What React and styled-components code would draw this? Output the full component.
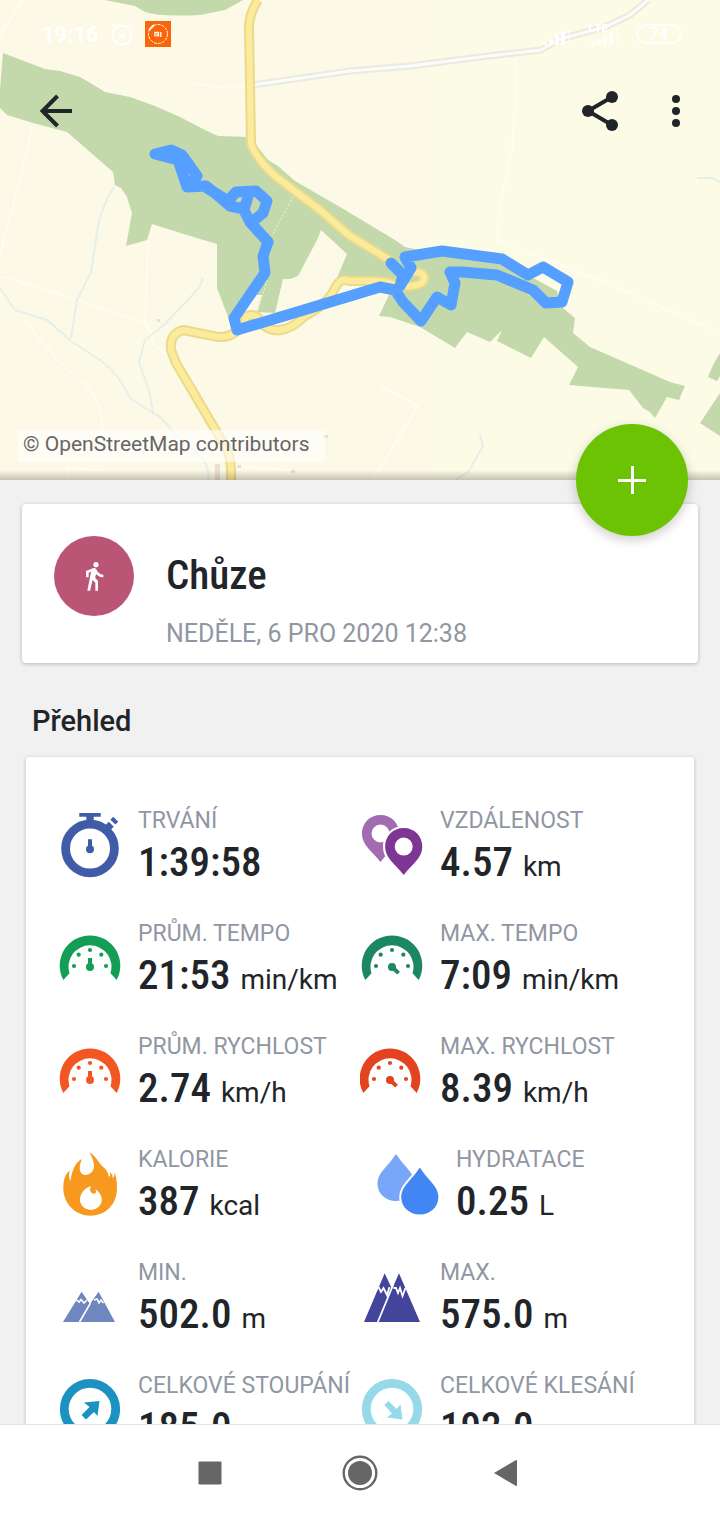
import React from "react";
import styled, { createGlobalStyle } from "styled-components";
import { MdDirectionsWalk } from "react-icons/md";

const GlobalStyle = createGlobalStyle`
  * { box-sizing: border-box; }
  body { margin: 0; background: #f1f1f1; font-family: Roboto, "Liberation Sans", sans-serif; color: #212529; }
  button { border: 0; padding: 0; background: none; color: inherit; font: inherit; cursor: pointer; }
  h1, h2, p, dl, dt, dd { margin: 0; font-weight: inherit; }
  svg { display: block; }
`;

const Screen = styled.div`
  display: flex;
  flex-direction: column;
  height: 100vh;
`;

const Content = styled.main`
  flex: 1;
  min-height: 0;
  overflow-y: auto;
  scrollbar-width: none;
`;

const MapHeader = styled.header`
  position: relative;
  display: grid;
  grid-template: 480px / 100%;
`;

const MapDrawing = styled.svg`
  grid-area: 1 / 1;
  width: 100%;
  height: 100%;
`;

const MapOverlay = styled.div`
  grid-area: 1 / 1;
  z-index: 1;
  display: flex;
  flex-direction: column;
  align-items: stretch;
`;

const StatusBar = styled.div`
  display: flex;
  align-items: center;
  gap: 11px;
  height: 68px;
  padding: 0 38px 0 42px;
  color: #ffffff;
`;

const Clock = styled.span`
  padding-top: 2px;
  font-size: 22px;
  line-height: 28px;
  font-weight: 700;
`;

const StatusRight = styled.div`
  display: flex;
  align-items: center;
  gap: 12px;
  margin-left: auto;
`;

const Battery = styled.span`
  display: grid;
  place-items: center;
  width: 46px;
  height: 20px;
  border: 2px solid #ffffff;
  border-radius: 10px;
  font-size: 16px;
  line-height: 16px;
  font-weight: 700;
`;

const Toolbar = styled.div`
  display: flex;
  align-items: center;
  gap: 28px;
  padding: 19px 20px 0 32px;
`;

const ToolButton = styled.button`
  width: 48px;
  height: 48px;
  &:first-child { margin-right: auto; }
`;

const Attribution = styled.p`
  align-self: flex-start;
  margin: auto 0 18px 18px;
  padding: 0 16px 4px 5px;
  background: rgba(255, 255, 255, 0.6);
  color: #666666;
  font-size: 21px;
  line-height: 28px;
`;

const AddButton = styled.button`
  position: absolute;
  right: 32px;
  bottom: -56px;
  z-index: 2;
  display: grid;
  place-items: center;
  width: 112px;
  height: 112px;
  border-radius: 50%;
  background: #6cc304;
  box-shadow: 0 4px 12px rgba(0, 0, 0, 0.2);
`;

const Card = styled.section`
  background: #ffffff;
  border-radius: 4px;
  box-shadow: 0 1px 4px rgba(0, 0, 0, 0.24);
`;

const SummaryCard = styled(Card)`
  display: flex;
  gap: 32px;
  margin: 24px 22px 0;
  padding: 32px 32px 13px;
`;

const SportBadge = styled.div`
  display: grid;
  place-items: center;
  flex: none;
  width: 80px;
  height: 80px;
  border-radius: 50%;
  background: #ba5576;
  color: #ffffff;
`;

const SportName = styled.h1`
  padding-top: 12px;
  font-family: "Roboto Condensed", Roboto, sans-serif;
  font-size: 41px;
  line-height: 54px;
  font-weight: 500;
`;

const SportDate = styled.p`
  margin-top: 16px;
  color: #9196a3;
  font-size: 25px;
  line-height: 32px;
`;

const SectionTitle = styled.h2`
  margin: 38px 32px 16px;
  font-size: 29px;
  line-height: 40px;
  font-weight: 500;
`;

const StatsCard = styled(Card)`
  margin: 0 26px 32px;
  padding: 48px 32px;
`;

const StatGrid = styled.dl`
  display: grid;
  grid-template-columns: 1fr 1fr;
  row-gap: 29px;
`;

const StatItem = styled.div`
  display: grid;
  grid-template: 32px 52px / 64px 1fr;
  column-gap: 16px;
  padding-left: ${(p) => (p.$indent ? "16px" : "0")};
  white-space: nowrap;
`;

const StatIcon = styled.svg`
  grid-row: 1 / 3;
  width: 64px;
  height: 84px;
`;

const StatLabel = styled.dt`
  grid-column: 2;
  color: #9196a3;
  font-size: 23px;
  line-height: 32px;
`;

const StatValue = styled.dd`
  grid-column: 2;
  font-family: "Roboto Condensed", Roboto, sans-serif;
  font-size: 41px;
  line-height: 50px;
  font-weight: 500;
`;

const StatUnit = styled.span`
  margin-left: 10px;
  font-family: Roboto, "Liberation Sans", sans-serif;
  font-size: 28px;
  font-weight: 400;
`;

const SystemNav = styled.nav`
  display: flex;
  justify-content: center;
  flex: none;
  height: 96px;
  border-top: 1px solid #e2e2e2;
  background: #ffffff;
`;

const NavButton = styled.button`
  display: grid;
  place-items: center;
  width: 150px;
  color: #666666;
`;

function RouteMap() {
  return (
    <MapDrawing viewBox="0 0 720 480" preserveAspectRatio="xMidYMid slice" role="img" aria-label="Mapa trasy">
      <defs>
        <linearGradient id="mapEdge" x1="0" y1="0" x2="0" y2="1">
          <stop offset="0" stopColor="#000000" stopOpacity="0" />
          <stop offset="1" stopColor="#000000" stopOpacity="0.22" />
        </linearGradient>
      </defs>
      <rect width="720" height="480" fill="#fcf9e6" />
      <rect x="430" width="290" height="480" fill="#fcfbe6" />
      <g fill="#c3d9ac">
        <path d="M105 0L135 6L145 12Q160 17 200 15L225 10L243 0Z" />
        <path d="M3 53L45 69L60 71L80 77L92 84L105 92L130 97L155 106L180 117L205 130L218 136L250 137L268 160L278 166L295 181L340 207L395 240L405 247L440 254L500 264L537 280L557 291L563 308L575 318L573 333L590 347L670 382L685 386L679 400L667 397L655 418L650 412L643 408L629 390L569 385L578 367L544 337L531 358L497 341L502 330L490 342L467 332L455 348L420 327L390 317L379 316L389 295L384 281L337 278L347 254L321 230L317 240L298 276L290 279L283 279L275 313L257 312L262 295L255 295L245 312L230 322L217 288L217 244L200 239L152 224L147 240L126 246L132 213L127 197L121 188L115 185L113 172L67 132L33 123L7 115L0 108L0 90Z" />
        <path d="M720 353L713 365L708 377L717 381L720 376ZM720 393L700 423L720 436Z" />
      </g>
      <g fill="none" stroke="#fffdf2" strokeWidth="2">
        <path d="M22 0L0 36M32 127L20 180L5 235L0 258M0 276L60 294L145 323Q152 330 153 343L166 355M148 240L145 323M25 320Q60 367 83 382Q103 401 102 430" />
        <path d="M515 56L516 90L512 150L500 205L497 240M495 240L600 280L720 333M380 385L418 406L373 480M193 83L215 87L249 86" />
        <path d="M68 480V468L110 471M235 466L290 470" />
        <path d="M293 197L272 236M267 280L257 314" strokeDasharray="2 2" strokeWidth="1" opacity="0.7" />
      </g>
      <g fill="none" stroke="#e6efea" strokeWidth="2">
        <path d="M114 187Q98 212 96 240L91 272L77 300L71 338M0 288L15 310L47 320L71 341L100 360Q120 375 130 398L153 413Q163 417 171 430L200 456Q210 466 208 480" />
        <path d="M203 278L199 288L165 324L145 340L139 363L149 390L153 413M697 178L712 178L720 182M480 434L483 446L468 472L455 480" />
      </g>
      <path d="M252 85L350 71L410 66L480 57L541 50L560 39L605 27L630 15L648 0" fill="none" stroke="#ebeae0" strokeWidth="7" />
      <path d="M252 85L350 71L410 66L480 57L541 50L560 39L605 27L630 15L648 0" fill="none" stroke="#fbfbf8" strokeWidth="3" />
      {[["#eada8b", 10], ["#fdeb9c", 6]].map(([color, width]) => (
        <path
          key={color}
          d="M258 0Q249 14 249 27L251 143Q254 156 275 176L320 210L350 236L388 259L400 272H415Q425 272 424 280Q421 287 402 286L380 281H350Q340 277 335 288Q327 305 305 316Q281 339 263 325Q257 312 247 316Q238 338 218 337L183 330Q169 334 171 350L176 363L222 441Q232 452 231 480"
          fill="none"
          stroke={color}
          strokeWidth={width}
          strokeLinejoin="round"
        />
      ))}
      <g fill="#eadfd3">
        <path d="M157 319h3v3h-3zM215 464h5v16h-5zM237 465h4v3h-4zM291 470h4v3h-4zM323 435h5v3h-5z" />
      </g>
      <g fill="none" stroke="#549fff" strokeWidth="11" strokeLinejoin="round" strokeLinecap="round">
        <path d="M155 154L171 150L182 155L197 176L187 187L178 160L155 154M176 156L184 160M187 187L206 186L222 199L230 206L244 209M204 186L228 201L236 192L256 191L267 201L263 213L252 222M249 193L244 210L250 222L268 242" />
        <path d="M268 242L263 256L265 273L234 318L237 330L380 287L395 290L403 302L421 321L437 297L451 305L455 283L450 272H462L497 275L533 290L546 303L562 302L568 282L543 267L528 275L502 259L442 251L405 257L411 268L400 286L403 275L391 263" />
      </g>
      <rect y="470" width="720" height="10" fill="url(#mapEdge)" />
    </MapDrawing>
  );
}

function AlarmIcon() {
  return (
    <svg width="24" height="24" viewBox="0 0 24 24" fill="none" stroke="currentColor" strokeWidth="2">
      <circle cx="12" cy="13" r="9.500" />
      <path d="M8 11.500l4 4 4-4M1 5l5-4M23 5l-5-4" />
    </svg>
  );
}

function MiBadge() {
  return (
    <svg width="26" height="26" viewBox="0 0 26 26" fill="none" stroke="#ffffff">
      <rect width="26" height="26" fill="#fb6408" stroke="none" />
      <circle cx="13" cy="13" r="9.500" strokeDasharray="3 1" />
      <path d="M4 9L9 4" strokeWidth="2" />
      <path d="M10 15.500V11.500H13.500V15.500M12 13V15.500M15.800 11V16" strokeWidth="1.300" />
    </svg>
  );
}

function SignalIcon({ lte }) {
  return (
    <svg width="36" height="26" viewBox="0 0 36 26" fill="currentColor">
      <path d="M3 21h4v3H3zM9 18h4v6H9zM15 14h4v10h-4zM21 10h4v14h-4z" opacity={lte ? 0.8 : 1} />
      <path d="M28 7h2v17h-2z" opacity="0.4" />
      {lte && <path d="M2 3v7h4M7 4h6M10 4v7M20 4h-5v6h5M15 7h4" fill="none" stroke="currentColor" strokeWidth="2" />}
    </svg>
  );
}

function Gauge({ color, max, shift = 0 }) {
  return (
    <g fill={color} transform={`translate(${shift} 0)`}>
      <path d="M5.300 62A30.300 30.300 0 1 1 58.700 62L52.500 55.300A21.500 21.500 0 1 0 11.500 55.300Z" />
      {[[16, 48], [20.7, 36.7], [32, 32], [43.3, 36.7], [48, 48]].map(([x, y]) => (
        <circle key={x} cx={x} cy={y} r="2.100" />
      ))}
      <circle cx="32" cy="49" r="4" />
      <path d="M30 40h4v9h-4z" transform={max ? "rotate(133 32 49)" : undefined} />
    </g>
  );
}

const PIN = "M0 -18.500C10.500 -18.500 18.600 -10.500 18.600 0C18.600 12 8 18 0 28.500C-8 18 -18.600 12 -18.600 0C-18.600 -10.500 -10.500 -18.500 0 -18.500ZM0 -9A9 9 0 1 0 0 9A9 9 0 1 0 0 -9Z";
const DROP = "M0 -28.500C7 -17 18.600 -10 18.600 1C18.600 11 10.500 18.500 0 18.500S-18.600 11 -18.600 1C-18.600 -10 -7 -17 0 -28.500Z";

const icons = {
  stopwatch: (
    <g fill="#405ca8">
      <circle cx="32" cy="43.500" r="24.400" fill="none" stroke="#405ca8" strokeWidth="8.800" />
      <path d="M21.300 8h21.400v3.700h-7V17h-7.400v-5.300h-7zM30 34.300h4V43h-4z" />
      <circle cx="32" cy="44.300" r="4" />
      <path d="M-3.500 -4h7v8h-7z" transform="translate(50.500 22) rotate(45)" />
      <path d="M-3.500 -2h7v4h-7z" transform="translate(56.300 15.700) rotate(45)" />
    </g>
  ),
  pins: (
    <g fillRule="evenodd">
      <path d={PIN} fill="#a26cb2" transform="translate(20.500 28.500)" />
      <path d="M43.700 21C56 21 64 30 64 41.700C64 54 54 62 43.700 73C33 62 23 54 23 41.700C23 30 32 21 43.700 21Z" fill="#ffffff" />
      <path d={PIN} fill="#7e3695" transform="translate(43.700 41.600)" />
    </g>
  ),
  paceAvg: <Gauge color="#139e56" />,
  paceMax: <Gauge color="#1c8762" max />,
  speedAvg: <Gauge color="#f15623" />,
  speedMax: <Gauge color="#e3431e" max shift={-2} />,
  flame: (
    <>
      <path d="M31.300 8.300C38 12 40 18 44 22C48 25 50 28 51 33Q53 31 51.500 28Q55 30 54.500 34Q57 32 56.500 28C58 32 59 37 59 44C59 61 47 71.700 32.300 71.700S5.300 60 5.300 44C5.300 36 7 30 11.700 26.700Q10 33 12.500 37C14 25 18 18 24 15C21 21 20 31 28 31C38 29 38 20 31.300 8.300Z" fill="#f8991f" />
      <path d="M33 42Q30 48 36 50Q39 49 37.500 45C41 48 43.700 51 43.700 55.500A10.800 10.500 0 0 1 22 55.500C22 49 27 44 33 42Z" fill="#ffffff" />
    </>
  ),
  drops: (
    <>
      <path d={DROP} fill="#78a7fa" transform="translate(20 38.500)" />
      <path d={DROP} fill="#4285f4" stroke="#ffffff" strokeWidth="4" paintOrder="stroke" transform="translate(43.800 52)" />
    </>
  ),
  hills: (
    <>
      <path d="M5 65L23.600 34.700L32 47L40.600 34.700L57 65Z" fill="#6f87be" />
      <path d="M21.500 65L32.500 46M18 42.500L21 45L23 42.500L26 46L29 43M36 43L39 42L41 46L43 43L45.500 46" fill="none" stroke="#ffffff" strokeWidth="1.600" />
    </>
  ),
  peaks: (
    <>
      <path d="M4 65L24.700 16.300L32 32L39 16.300L60 65Z" fill="#43459b" />
      <path d="M17.800 65L33.500 27M18.500 30L21 35L23.500 31L27 38L29.500 30M33.500 31L36 31L38 36L40 31L42.500 39L45.500 31" fill="none" stroke="#ffffff" strokeWidth="1.800" />
    </>
  ),
  ascent: (
    <>
      <circle cx="32" cy="39" r="25.700" fill="none" stroke="#1c92c1" strokeWidth="8.800" />
      <path d="M41.500 31L39.500 46L36 42L28 49.500L23.600 45L31.500 37L26 32.500Z" fill="#1c92c1" />
    </>
  ),
  descent: (
    <>
      <circle cx="32" cy="39" r="25.700" fill="none" stroke="#96d9e8" strokeWidth="8.800" />
      <path d="M42.500 49.500L27 47.500L32 43.500L24.300 35L28.500 31L36.500 39L40.500 34.500Z" fill="#96d9e8" />
    </>
  ),
};

const stats = [
  { icon: "stopwatch", label: "TRVÁNÍ", value: "1:39:58" },
  { icon: "pins", label: "VZDÁLENOST", value: "4.57", unit: "km" },
  { icon: "paceAvg", label: "PRŮM. TEMPO", value: "21:53", unit: "min/km" },
  { icon: "paceMax", label: "MAX. TEMPO", value: "7:09", unit: "min/km" },
  { icon: "speedAvg", label: "PRŮM. RYCHLOST", value: "2.74", unit: "km/h" },
  { icon: "speedMax", label: "MAX. RYCHLOST", value: "8.39", unit: "km/h" },
  { icon: "flame", label: "KALORIE", value: "387", unit: "kcal" },
  { icon: "drops", label: "HYDRATACE", value: "0.25", unit: "L", indent: true },
  { icon: "hills", label: "MIN.", value: "502.0", unit: "m" },
  { icon: "peaks", label: "MAX.", value: "575.0", unit: "m" },
  { icon: "ascent", label: "CELKOVÉ STOUPÁNÍ", value: "185.0" },
  { icon: "descent", label: "CELKOVÉ KLESÁNÍ", value: "192.0" },
];

export default function App() {
  return (
    <Screen>
      <GlobalStyle />
      <Content>
        <MapHeader>
          <RouteMap />
          <MapOverlay>
            <StatusBar>
              <Clock>19:16</Clock>
              <AlarmIcon />
              <MiBadge />
              <StatusRight>
                <SignalIcon />
                <SignalIcon lte />
                <Battery>74</Battery>
              </StatusRight>
            </StatusBar>
            <Toolbar>
              <ToolButton aria-label="Zpět">
                <svg width="48" height="48" viewBox="0 0 48 48" fill="none" stroke="#212529" strokeWidth="4">
                  <path d="M40 24H11M25.500 9L10.500 24L25.500 39" />
                </svg>
              </ToolButton>
              <ToolButton aria-label="Sdílet">
                <svg width="48" height="48" viewBox="0 0 48 48" fill="#212529">
                  <path d="M36 10L12 24L36 38" fill="none" stroke="#212529" strokeWidth="4" />
                  <circle cx="12" cy="24" r="6" />
                  <circle cx="36" cy="10" r="6" />
                  <circle cx="36" cy="38" r="6" />
                </svg>
              </ToolButton>
              <ToolButton aria-label="Další možnosti">
                <svg width="48" height="48" viewBox="0 0 48 48" fill="#212529">
                  <circle cx="24" cy="12" r="4" />
                  <circle cx="24" cy="24" r="4" />
                  <circle cx="24" cy="36" r="4" />
                </svg>
              </ToolButton>
            </Toolbar>
            <Attribution>© OpenStreetMap contributors</Attribution>
          </MapOverlay>
          <AddButton aria-label="Přidat">
            <svg width="28" height="28" viewBox="0 0 28 28" stroke="#ffffff" strokeWidth="3">
              <path d="M14.500 0V28M0 14.500H28" />
            </svg>
          </AddButton>
        </MapHeader>
        <SummaryCard>
          <SportBadge>
            <MdDirectionsWalk size={32} />
          </SportBadge>
          <div>
            <SportName>Chůze</SportName>
            <SportDate>NEDĚLE, 6 PRO 2020 12:38</SportDate>
          </div>
        </SummaryCard>
        <SectionTitle>Přehled</SectionTitle>
        <StatsCard>
          <StatGrid>
            {stats.map((s) => (
              <StatItem key={s.label} $indent={s.indent}>
                <StatIcon viewBox="0 0 64 84" aria-hidden="true">{icons[s.icon]}</StatIcon>
                <StatLabel>{s.label}</StatLabel>
                <StatValue>
                  {s.value}
                  {s.unit && <StatUnit>{s.unit}</StatUnit>}
                </StatValue>
              </StatItem>
            ))}
          </StatGrid>
        </StatsCard>
      </Content>
      <SystemNav>
        <NavButton aria-label="Přehled aplikací">
          <svg width="36" height="36" viewBox="0 0 36 36" fill="currentColor">
            <rect x="6.500" y="6.500" width="23" height="23" rx="1" />
          </svg>
        </NavButton>
        <NavButton aria-label="Domů">
          <svg width="36" height="36" viewBox="0 0 36 36" fill="currentColor">
            <circle cx="18" cy="18" r="16.300" fill="none" stroke="currentColor" strokeWidth="2.400" />
            <circle cx="18" cy="18" r="12" />
          </svg>
        </NavButton>
        <NavButton aria-label="Systémové zpět">
          <svg width="36" height="36" viewBox="0 0 36 36" fill="currentColor">
            <path d="M2 18L24 5Q25 5 25 6V30Q25 31 24 31Z" />
          </svg>
        </NavButton>
      </SystemNav>
    </Screen>
  );
}
